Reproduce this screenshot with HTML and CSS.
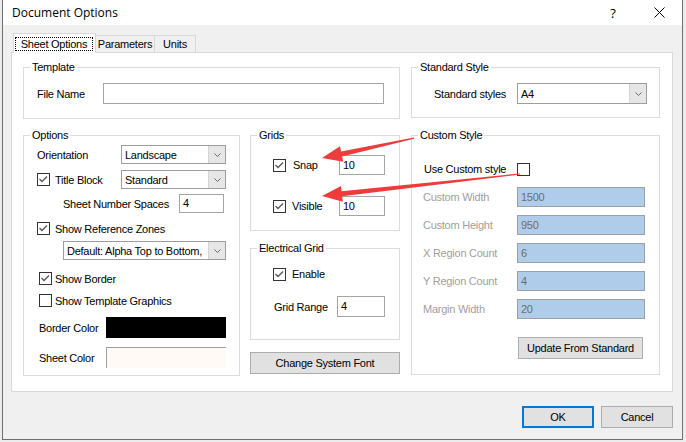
FILE: index.html
```html
<!DOCTYPE html>
<html lang="en">
<head>
<meta charset="utf-8">
<title>Document Options</title>
<link rel="stylesheet" href="styles.css">
</head>
<body>
<div class="dialog">
  <header class="titlebar">
    <span class="title">Document Options</span>
    <span class="tbtn help">?</span>
    <span class="tbtn close"><svg width="11" height="11" viewBox="0 0 11 11"><path d="M0.5 0.5L10.5 10.5M10.5 0.5L0.5 10.5"/></svg></span>
  </header>
  <nav class="tabs">
    <div class="tab active"><span class="focus">Sheet Options</span></div>
    <div class="tab params">Parameters</div>
    <div class="tab units">Units</div>
  </nav>
  <main class="panel">
    <fieldset class="group template">
      <legend>Template</legend>
      <div class="gbody tpl-body">
        <div class="row h21">
          <span class="lbl w66">File Name</span>
          <span class="edit h21 w281"></span>
        </div>
      </div>
    </fieldset>

    <fieldset class="group standard">
      <legend>Standard Style</legend>
      <div class="gbody std-body">
        <div class="row h21">
          <span class="lbl w83">Standard styles</span>
          <span class="combo h21 w130"><span class="val">A4</span><span class="drop"><svg width="7" height="4" viewBox="0 0 7 4"><path d="M0.5 0.5L3.5 3.5L6.5 0.5"/></svg></span></span>
        </div>
      </div>
    </fieldset>

    <fieldset class="group options">
      <legend>Options</legend>
      <div class="gbody opt-body">
        <div class="row mt3">
          <span class="lbl w84">Orientation</span>
          <span class="combo w105"><span class="val">Landscape</span><span class="drop"><svg width="7" height="4" viewBox="0 0 7 4"><path d="M0.5 0.5L3.5 3.5L6.5 0.5"/></svg></span></span>
        </div>
        <div class="row mt6">
          <span class="chk w84"><span class="cb"><svg viewBox="0 0 11 11"><path d="M1.5 5L4 7.5L9 2.5"/></svg></span>Title Block</span>
          <span class="combo w105"><span class="val">Standard</span><span class="drop"><svg width="7" height="4" viewBox="0 0 7 4"><path d="M0.5 0.5L3.5 3.5L6.5 0.5"/></svg></span></span>
        </div>
        <div class="row mt5 in26">
          <span class="lbl w116">Sheet Number Spaces</span>
          <span class="edit w45">4</span>
        </div>
        <div class="row mt6">
          <span class="chk"><span class="cb"><svg viewBox="0 0 11 11"><path d="M1.5 5L4 7.5L9 2.5"/></svg></span>Show Reference Zones</span>
        </div>
        <div class="row mt3 in26">
          <span class="combo w163"><span class="val">Default: Alpha Top to Bottom,</span><span class="drop"><svg width="7" height="4" viewBox="0 0 7 4"><path d="M0.5 0.5L3.5 3.5L6.5 0.5"/></svg></span></span>
        </div>
        <div class="row mt9 in2">
          <span class="chk tight"><span class="cb"><svg viewBox="0 0 11 11"><path d="M1.5 5L4 7.5L9 2.5"/></svg></span>Show Border</span>
        </div>
        <div class="row mt3 in2">
          <span class="chk tight"><span class="cb"></span>Show Template Graphics</span>
        </div>
        <div class="row h21 mt7 in2">
          <span class="lbl w67">Border Color</span>
          <span class="swatch swatch-black"></span>
        </div>
        <div class="row h21 mt9 in2">
          <span class="lbl w67">Sheet Color</span>
          <span class="swatch swatch-sheet"></span>
        </div>
      </div>
    </fieldset>

    <div class="midcol">
      <fieldset class="group grids">
        <legend>Grids</legend>
        <div class="gbody grid-body">
          <div class="row h20 mt13">
            <span class="chk gap7 w66"><span class="cb"><svg viewBox="0 0 11 11"><path d="M1.5 5L4 7.5L9 2.5"/></svg></span>Snap</span>
            <span class="edit h20 w46">10</span>
          </div>
          <div class="row h20 mt21">
            <span class="chk gap6 w66"><span class="cb"><svg viewBox="0 0 11 11"><path d="M1.5 5L4 7.5L9 2.5"/></svg></span>Visible</span>
            <span class="edit h20 w46">10</span>
          </div>
        </div>
      </fieldset>

      <fieldset class="group egrid">
        <legend>Electrical Grid</legend>
        <div class="gbody egrid-body">
          <div class="row h20 mt9">
            <span class="chk gap6"><span class="cb"><svg viewBox="0 0 11 11"><path d="M1.5 5L4 7.5L9 2.5"/></svg></span>Enable</span>
          </div>
          <div class="row h21 mt12 in1">
            <span class="lbl w63">Grid Range</span>
            <span class="edit h21 w48">4</span>
          </div>
        </div>
      </fieldset>

      <button class="btn btn-font">Change System Font</button>
    </div>

    <fieldset class="group custom">
      <legend>Custom Style</legend>
      <div class="gbody cus-body">
        <div class="row h20 mt17">
          <span class="lbl w93">Use Custom style</span>
          <span class="cb"></span>
        </div>
        <div class="row h20 mt8">
          <span class="lbl dis w93">Custom Width</span>
          <span class="edit dis h20 w128">1500</span>
        </div>
        <div class="row h20 mt8">
          <span class="lbl dis w93">Custom Height</span>
          <span class="edit dis h20 w128">950</span>
        </div>
        <div class="row h20 mt8">
          <span class="lbl dis w93">X Region Count</span>
          <span class="edit dis h20 w128">6</span>
        </div>
        <div class="row h20 mt8">
          <span class="lbl dis w93">Y Region Count</span>
          <span class="edit dis h20 w128">4</span>
        </div>
        <div class="row h20 mt8">
          <span class="lbl dis w93">Margin Width</span>
          <span class="edit dis h20 w128">20</span>
        </div>
        <div class="row h22 mt18">
          <button class="btn btn-upd">Update From Standard</button>
        </div>
      </div>
    </fieldset>
  </main>
  <footer class="footer">
    <button class="btn btn-ok">OK</button>
    <button class="btn btn-cancel">Cancel</button>
  </footer>
</div>

<svg class="annot" width="686" height="442" viewBox="0 0 686 442">
  <polygon points="322,158 340,146.2 341.1,151.5 413.9,137.4 414.1,138.8 342.1,156.4 343.2,161.8"/>
  <polygon points="322,196 341,185.9 341.6,191.3 519.9,173.4 520.1,174.6 342.2,196.3 342.8,201.8"/>
</svg>
</body>
</html>
```

FILE: styles.css
```css
* { box-sizing: border-box; }
html, body { margin: 0; padding: 0; }
body {
  width: 686px;
  height: 442px;
  overflow: hidden;
  position: relative;
  background: #ececec;
  font-family: "Liberation Sans", Arial, sans-serif;
  font-size: 11px;
  letter-spacing: -0.25px;
  color: #000;
}

.dialog {
  margin-left: 2px;
  width: 681px;
  height: 440px;
  background: #f0f0f0;
  border: 1px solid #6f6f6f;
  border-top: 0;
  display: flex;
  flex-direction: column;
}

/* title bar */
.titlebar {
  flex: none;
  height: 25px;
  background: #fff;
  display: flex;
  align-items: center;
  padding-left: 9px;
}
.title {
  flex: 1;
  font-family: "Open Sans", "Noto Sans", sans-serif;
  font-size: 12px;
  letter-spacing: 0;
}
.tbtn {
  width: 46px;
  height: 25px;
  display: flex;
  align-items: center;
  justify-content: center;
}
.help { font-family: "Open Sans", sans-serif; font-size: 13px; letter-spacing: 0; }
.close svg path { stroke: #000; stroke-width: 1; fill: none; }

/* tabs */
.tabs {
  flex: none;
  height: 27px;
  display: flex;
  align-items: flex-end;
  padding-left: 10px;
  position: relative;
  z-index: 1;
}
.tab {
  height: 17px;
  border: 1px solid #d9d9d9;
  border-bottom: 0;
  background: #f0f0f0;
  text-align: center;
  line-height: 16px;
}
.tab.active {
  width: 83px;
  height: 20px;
  margin-bottom: -1px;
  background: #fff;
  padding-top: 3px;
}
.focus {
  display: block;
  margin-left: 1px;
  width: 78px;
  height: 14px;
  line-height: 12px;
  border: 1px dotted #000;
}
.params { width: 59px; border-left: 0; }
.units { width: 41px; border-left: 0; }

/* panel */
.panel {
  flex: none;
  margin-left: 8px;
  width: 662px;
  height: 340px;
  background: #fff;
  border: 1px solid #d9d9d9;
  padding: 7px 0 0 11px;
  display: grid;
  grid-template-columns: 217px 10px 150px 11px 249px;
  row-gap: 9px;
  align-items: start;
  align-content: start;
}
.template { grid-column: 1 / 4; grid-row: 1; }
.standard { grid-column: 5; grid-row: 1; }
.options { grid-column: 1; grid-row: 2; }
.midcol { grid-column: 3; grid-row: 2; display: flex; flex-direction: column; }
.custom { grid-column: 5; grid-row: 2; }

.group {
  margin: 0;
  padding: 0;
  border: 1px solid #dcdcdc;
  min-width: 0;
}
.group legend {
  margin-left: 6px;
  padding: 0 2px;
  line-height: 14px;
  font-size: 11px;
}
.gbody { display: flex; flex-direction: column; }
.tpl-body { padding: 9px 0 14px 13px; }
.std-body { padding: 9px 0 13px 22px; }
.opt-body { padding: 0 0 7px 13px; }
.grid-body { padding: 0 0 14px 22px; }
.egrid { margin-top: 10px; }
.egrid-body { padding: 0 0 22px 22px; }
.cus-body { padding: 0 0 15px 12px; }

/* rows */
.row { display: flex; align-items: center; height: 19px; }
.h20 { height: 20px; }
.h21 { height: 21px; }
.h22 { height: 22px; }
.mt3 { margin-top: 3px; }
.mt5 { margin-top: 5px; }
.mt6 { margin-top: 6px; }
.mt7 { margin-top: 7px; }
.mt8 { margin-top: 8px; }
.mt9 { margin-top: 9px; }
.mt12 { margin-top: 12px; }
.mt13 { margin-top: 13px; }
.mt17 { margin-top: 17px; }
.mt18 { margin-top: 18px; }
.mt21 { margin-top: 21px; }
.in1 { padding-left: 1px; }
.in2 { padding-left: 2px; }
.in26 { padding-left: 26px; }

.w45 { width: 45px; }
.w46 { width: 46px; }
.w48 { width: 48px; }
.w63 { width: 63px; }
.w66 { width: 66px; }
.w67 { width: 67px; }
.w83 { width: 83px; }
.w84 { width: 84px; }
.w93 { width: 93px; }
.w105 { width: 105px; }
.w116 { width: 116px; }
.w128 { width: 128px; }
.w130 { width: 130px; }
.w163 { width: 163px; }
.w281 { width: 281px; }

.lbl { flex: none; white-space: nowrap; }
.lbl.dis { color: #a0a0a0; margin-left: -1px; width: 94px; }

/* edit box */
.edit {
  flex: none;
  display: block;
  height: 19px;
  border: 1px solid #a5a5a5;
  background: #fff;
  padding-left: 3px;
  line-height: 17px;
}
.edit.h20 { height: 20px; line-height: 18px; }
.edit.h21 { height: 21px; line-height: 19px; }
.edit.dis { background: #afcdeb; color: #6d6d6d; border-color: #a0a0a0; }

/* combo box */
.combo {
  flex: none;
  display: flex;
  height: 19px;
  border: 1px solid #9d9d9d;
  background: #fff;
}
.combo.h21 { height: 21px; }
.combo .val {
  flex: 1;
  min-width: 0;
  overflow: hidden;
  white-space: nowrap;
  padding-left: 3px;
  display: flex;
  align-items: center;
}
.combo .drop {
  flex: none;
  width: 17px;
  background: #e6e6e6;
  border-left: 1px solid #d4d4d4;
  display: flex;
  align-items: center;
  justify-content: center;
}
.drop svg path { stroke: #6a6a6a; stroke-width: 1; fill: none; }

/* checkbox */
.chk { flex: none; display: flex; align-items: center; gap: 5px; white-space: nowrap; }
.chk.tight { gap: 3px; }
.chk.gap6 { gap: 6px; }
.chk.gap7 { gap: 7px; }
.cb {
  flex: none;
  display: block;
  width: 13px;
  height: 13px;
  border: 1px solid #333;
  background: #fff;
}
.cb svg { display: block; width: 11px; height: 11px; }
.cb svg path { stroke: #555; stroke-width: 1.3; fill: none; }

/* color swatches */
.swatch { flex: none; display: block; width: 120px; height: 21px; }
.swatch-black { background: #000; }
.swatch-sheet {
  background: #fffaf5;
  border-top: 1px solid #a0a0a0;
  border-left: 1px solid #a0a0a0;
}

/* buttons */
.btn {
  font: inherit;
  letter-spacing: inherit;
  color: #000;
  height: 22px;
  padding: 0;
  background: #e1e1e1;
  border: 1px solid #adadad;
}
.btn-font { margin-top: 12px; width: 150px; }
.btn-upd { margin-left: 94px; width: 125px; }

.footer {
  flex: none;
  display: flex;
  justify-content: flex-end;
  gap: 7px;
  padding-right: 9px;
  margin-top: 14px;
}
.btn-ok, .btn-cancel { width: 72px; }
.btn-ok { border: 2px solid #0078d7; }

/* annotation arrows */
.annot {
  position: absolute;
  left: 0;
  top: 0;
  pointer-events: none;
}
.annot polygon { fill: #ee3b3b; }
```
